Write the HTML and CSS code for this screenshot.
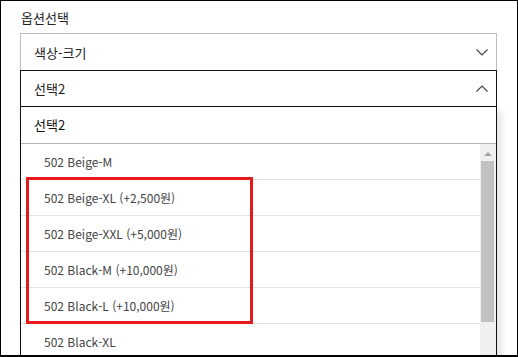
FILE: index.html
```html
<!DOCTYPE html>
<html lang="ko">
<head>
<meta charset="utf-8">
<link rel="stylesheet" href="styles.css">
</head>
<body>
<div class="frame">
  <div class="field">
    <div class="label">옵션선택</div>
    <div class="select first">
      <span>색상-크기</span>
      <svg class="chev" width="12" height="7" viewBox="0 0 12 7"><path d="M0.5 0.5 L6 6 L11.5 0.5" fill="none" stroke="#444" stroke-width="1.2"/></svg>
    </div>
    <div class="select open">
      <span>선택2</span>
      <svg class="chev" width="12" height="7" viewBox="0 0 12 7"><path d="M0.5 6.5 L6 1 L11.5 6.5" fill="none" stroke="#444" stroke-width="1.2"/></svg>
    </div>
    <div class="dropdown">
      <div class="dd-head">선택2</div>
      <div class="dd-body">
        <ul class="items">
          <li>502 Beige-M</li>
          <li>502 Beige-XL (+2,500원)</li>
          <li>502 Beige-XXL (+5,000원)</li>
          <li>502 Black-M (+10,000원)</li>
          <li>502 Black-L (+10,000원)</li>
          <li>502 Black-XL</li>
        </ul>
        <div class="scrollbar">
          <div class="arrow"></div>
          <div class="thumb"></div>
        </div>
      </div>
    </div>
  </div>
  <div class="highlight"></div>
</div>
</body>
</html>
```
FILE: styles.css
```css
* { box-sizing: border-box; }
html, body { margin: 0; padding: 0; background: #fff; }
body { font-family: "Noto Sans CJK KR", "Noto Sans", sans-serif; }
.frame {
  position: relative;
  width: 518px;
  height: 357px;
  border: 1px solid #000;
  border-bottom-width: 2px;
  overflow: hidden;
  padding: 0 0 0 19px;
}
.field { width: 477px; }
.label {
  font-size: 13px;
  line-height: 20px;
  height: 20px;
  margin: 7px 0 5px 1px;
  color: #222;
}
.select {
  display: flex;
  align-items: center;
  justify-content: space-between;
  height: 37px;
  padding: 0 8px 0 13px;
  font-size: 13px;
  color: #222;
}
.select.first {
  border: 1px solid #bdbdbd;
  border-bottom: none;
}
.select.open {
  border: 1px solid #111;
}
.chev { display: block; }
.dropdown {
  border-left: 1px solid #111;
  border-right: 1px solid #111;
  box-shadow: 4px 4px 8px rgba(0,0,0,0.12);
  background: #fff;
}
.dd-head {
  height: 37px;
  line-height: 36px;
  padding-left: 13px;
  font-size: 13px;
  color: #111;
  border-bottom: 1px solid #b5b5b5;
}
.dd-body { display: flex; }
.items {
  flex: 1;
  list-style: none;
  margin: 0;
  padding: 0;
}
.items li {
  height: 36px;
  line-height: 35px;
  padding-left: 23px;
  font-size: 12px;
  color: #444;
  border-bottom: 1px solid #e3e3e3;
}
.scrollbar {
  width: 16px;
  background: #f0f0f0;
  display: flex;
  flex-direction: column;
  align-items: center;
}
.arrow {
  margin-top: 8px;
  width: 0;
  height: 0;
  border-left: 4px solid transparent;
  border-right: 4px solid transparent;
  border-bottom: 4px solid #a3a3a3;
}
.thumb {
  margin-top: 5px;
  width: 13px;
  margin-left: -1px;
  height: 161px;
  background: #c1c1c1;
}
.highlight {
  position: absolute;
  left: 25px;
  top: 176px;
  width: 227px;
  height: 147px;
  border: 3px solid #e51b1b;
}
```
